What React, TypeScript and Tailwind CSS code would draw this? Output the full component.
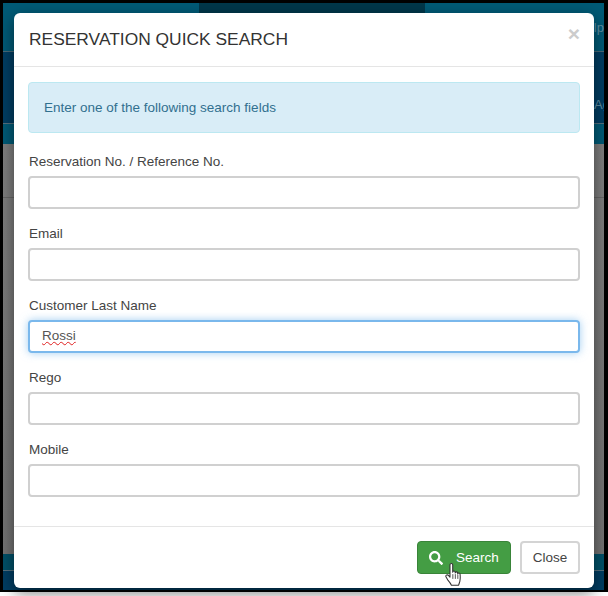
import { FaSearch } from "react-icons/fa";

const fields = [
    { label: "Reservation No. / Reference No.", value: "" },
    { label: "Email", value: "" },
    { label: "Customer Last Name", value: "Rossi", focused: true },
    { label: "Rego", value: "" },
    { label: "Mobile", value: "" },
];

function HandCursor() {
    return (
        <svg width="19" height="29" viewBox="0 0 16 24" className="absolute left-[27px] top-[20px]">
            <path
                d="M4.2 2.2c0-1.600 2.300-1.600 2.300 0v6.200c.1-1.400 2-1.400 2.100 0v.6c.1-1.200 2-1.200 2.100.1v.7c.2-1 1.900-.9 2 .3.2 2 .2 4.200-.2 6-.3 1.200-.7 2-1 3.200H5.400c-.6-1.400-1.600-2.600-2.800-4L.9 12.400c-.8-1.200.9-2.500 2-1.300l1.300 1.500z"
                fill="#fff"
                stroke="#333"
                strokeWidth="0.9"
                strokeLinejoin="round"
            />
            <path d="M6.600 10v4M8.700 10v4M10.800 10.500v3.500" stroke="#333" strokeWidth="0.7" fill="none" />
        </svg>
    );
}

function Field({ label, value, focused }: { label: string; value: string; focused?: boolean }) {
    return (
        <div className="mb-[14px]">
            <div className="mb-[5px] h-[20px] pl-px pt-px text-[13.5px] leading-[20px] text-[#444]">{label}</div>
            {focused ? (
                <div className="flex h-[33px] w-full items-center rounded border-2 border-[#7ab8ec] bg-white px-[12px] text-[13.5px] text-[#555] shadow-[0_0_8px_rgba(102,175,233,0.6)]">
                    <span className="underline decoration-[#e02020] decoration-wavy decoration-1 underline-offset-1">{value}</span>
                </div>
            ) : (
                <input
                    readOnly
                    value={value}
                    className="block h-[33px] w-full rounded border-2 border-[#d0d0d0] bg-white px-[12px] text-[13.5px] text-[#555] outline-none"
                />
            )}
        </div>
    );
}

export default function App() {
    return (
        <div className="relative h-[596px] w-[608px] overflow-hidden bg-white font-['Liberation_Sans',Arial,sans-serif]">
            {/* page behind the modal, inside the black screenshot frame */}
            <div className="h-[592px] bg-black pb-[2px] pl-[3px] pr-[4px] pt-[3px]">
                <div className="flex h-full flex-col">
                    <div className="flex h-[49px] border-b border-[#4a6a78] bg-[#005a76]">
                        <div className="w-[196px]" />
                        <div className="h-[10px] w-[226px] bg-[#00374a]" />
                        <div className="flex-1 pt-[15px] text-right text-[13px] text-[#5f8fa3]">elp</div>
                    </div>
                    <div className="flex h-[72px] items-end justify-end overflow-hidden border-b border-[#56707e] bg-[#003d62] pb-[9px] text-[13px] text-[#5f8fa3]">
                        <span className="-mr-[6px] w-[16px]">Ag</span>
                    </div>
                    <div className="h-[20px] bg-[#005a76]" />
                    <div className="h-[410px] bg-gradient-to-b from-[#7e7e7e] to-[#727272]">
                        <div className="mt-[53px] h-px bg-[#666]" />
                    </div>
                    <div className="h-[16px] bg-[#005068]" />
                    <div className="h-px bg-[#56707e]" />
                    <div className="flex-1 bg-[#003d62]" />
                </div>
            </div>

            {/* modal */}
            <div className="absolute left-[14px] top-[13px] flex h-[575px] w-[580px] flex-col rounded-md bg-white shadow-[0_5px_15px_rgba(0,0,0,0.5)]">
                <div className="relative flex h-[54px] items-center border-b border-[#e5e5e5] px-[15px] pb-[2px]">
                    <h4 className="text-[17.4px] leading-[20px] text-[#333]">RESERVATION QUICK SEARCH</h4>
                    <span className="absolute right-[14px] top-[8px] text-[21px] font-bold leading-[26px] text-[#cccccc]">×</span>
                </div>
                <div className="flex-1 px-[14px] pt-[15px]">
                    <div className="mb-[18px] flex h-[51px] items-center rounded border border-[#bce8f1] bg-[#d9edf7] px-[15px] pt-px text-[13.5px] text-[#31708f]">
                        Enter one of the following search fields
                    </div>
                    <div>
                        {fields.map((f) => (
                            <Field key={f.label} label={f.label} value={f.value} focused={f.focused} />
                        ))}
                    </div>
                </div>
                <div className="flex h-[62px] items-start justify-end gap-[9px] border-t border-[#e5e5e5] px-[14px] pt-[14px]">
                    <button className="relative flex h-[33px] w-[94px] items-center rounded border border-[#398439] bg-[#449d44] pl-[11px] pt-px text-[13.5px] text-white">
                        <FaSearch className="h-[14px] w-[14px]" />
                        <span className="ml-[13px]">Search</span>
                        <HandCursor />
                    </button>
                    <button className="h-[33px] w-[60px] rounded border-2 border-[#d4d4d4] bg-white pt-px text-[13.5px] text-[#444]">Close</button>
                </div>
            </div>
        </div>
    );
}
